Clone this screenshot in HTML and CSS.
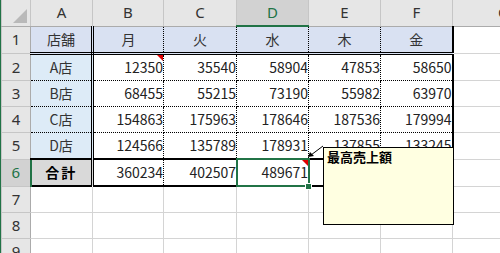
FILE: index.html
```html
<!DOCTYPE html>
<html lang="ja">
<head>
  <meta charset="UTF-8">
  <title>売上表</title>
  <link rel="stylesheet" href="styles.css">
</head>
<body>
  <div class="sheet">
    <table class="grid">
      <colgroup>
        <col class="c-head"><col class="c-a"><col class="c-b"><col class="c-c"><col class="c-d"><col class="c-e"><col class="c-f"><col class="c-g">
      </colgroup>
      <tr class="col-heads">
        <th class="corner"></th><th>A</th><th>B</th><th>C</th><th class="sel-col">D</th><th>E</th><th>F</th><th>G</th>
      </tr>
      <tr class="r1">
        <th class="row-head">1</th>
        <td class="hd">店舗</td><td class="hd">月</td><td class="hd">火</td><td class="hd">水</td><td class="hd">木</td><td class="hd last">金</td><td class="blank"></td>
      </tr>
      <tr class="body-row">
        <th class="row-head">2</th>
        <td class="shop">A店</td><td class="num note">12350</td><td class="num">35540</td><td class="num">58904</td><td class="num">47853</td><td class="num last">58650</td><td class="blank"></td>
      </tr>
      <tr class="body-row">
        <th class="row-head">3</th>
        <td class="shop">B店</td><td class="num">68455</td><td class="num">55215</td><td class="num">73190</td><td class="num">55982</td><td class="num last">63970</td><td class="blank"></td>
      </tr>
      <tr class="body-row">
        <th class="row-head">4</th>
        <td class="shop">C店</td><td class="num">154863</td><td class="num">175963</td><td class="num">178646</td><td class="num">187536</td><td class="num last">179994</td><td class="blank"></td>
      </tr>
      <tr class="body-row r5">
        <th class="row-head">5</th>
        <td class="shop">D店</td><td class="num">124566</td><td class="num">135789</td><td class="num">178931</td><td class="num">137855</td><td class="num last">133245</td><td class="blank"></td>
      </tr>
      <tr class="total">
        <th class="row-head sel-row">6</th>
        <td class="sum">合計</td><td class="num">360234</td><td class="num">402507</td><td class="num note active">489671<span class="handle"></span></td><td class="num"></td><td class="num last"></td><td class="blank"></td>
      </tr>
      <tr>
        <th class="row-head">7</th>
        <td class="blank"></td><td class="blank"></td><td class="blank"></td><td class="blank"></td><td class="blank"></td><td class="blank"></td><td class="blank"></td>
      </tr>
      <tr>
        <th class="row-head">8</th>
        <td class="blank"></td><td class="blank"></td><td class="blank"></td><td class="blank"></td><td class="blank"></td><td class="blank"></td><td class="blank"></td>
      </tr>
      <tr>
        <th class="row-head">9</th>
        <td class="blank"></td><td class="blank"></td><td class="blank"></td><td class="blank"></td><td class="blank"></td><td class="blank"></td><td class="blank"></td>
      </tr>
    </table>

    <!-- comment popup for D6 -->
    <svg class="pointer" width="20" height="14" viewBox="0 0 20 14">
      <line x1="16" y1="1" x2="4" y2="10" stroke="#000" stroke-width="1"/>
      <polygon points="1,12 3,7 7,11" fill="#000"/>
    </svg>
    <div class="comment">最高売上額</div>
  </div>
</body>
</html>
```

FILE: styles.css
```css
body {
  margin: 0;
  background: #fff;
  overflow: hidden;
  font-family: "Noto Sans CJK JP", "Noto Sans", sans-serif;
}
.sheet {
  position: relative;
  width: 500px;
  height: 253px;
  overflow: hidden;
  border-left: 1px solid #217346;
  box-sizing: border-box;
}
.grid {
  border-collapse: collapse;
  table-layout: fixed;
  width: 553px;
  font-size: 14px;
  color: #000;
}
.c-head { width: 29px; }
.c-a { width: 62px; }
.c-b { width: 71px; }
.c-c { width: 73px; }
.c-d { width: 72px; }
.c-e { width: 72px; }
.c-f { width: 72px; }
.c-g { width: 102px; }

.grid th, .grid td {
  height: 25px;
  padding: 0;
  line-height: 25px;
  white-space: nowrap;
  overflow: visible;
}

/* column and row headings */
.col-heads th {
  background: #e6e6e6;
  border: 1px solid #c6c6c6;
  border-top: none;
  border-bottom: 1px solid #ababab;
  font-family: "Noto Sans", sans-serif;
  font-weight: normal;
  font-size: 15px;
  color: #333;
  height: 25px;
}
.col-heads .sel-col {
  background: #d2d2d2;
  color: #217346;
  border-bottom: 2px solid #217346;
}
.corner {
  position: relative;
}
.corner::after {
  content: "";
  position: absolute;
  right: 3px;
  bottom: 3px;
  border-style: solid;
  border-width: 0 0 14px 14px;
  border-color: transparent transparent #b9b9b9 transparent;
}
.row-head {
  background: #e6e6e6;
  border: 1px solid #c6c6c6;
  border-right: 1px solid #ababab;
  font-family: "Noto Sans", sans-serif;
  font-weight: normal;
  font-size: 15px;
  color: #333;
}
.row-head.sel-row {
  background: #d2d2d2;
  color: #217346;
  border-right: 2px solid #217346;
}

/* empty gridlines */
.blank {
  border: 1px solid #d4d4d4;
}

/* data region */
.hd, .shop, .num, .sum {
  border: 1px dotted #000;
}
.hd {
  background: #d9e1f2;
  text-align: center;
  color: #333;
  border-bottom: 3px double #000;
}
.shop {
  background: #ddebf7;
  text-align: center;
  color: #333;
}
.r1 .hd:first-of-type,
.shop, .sum {
  border-right: 3px double #000;
}
.sum {
  background: #d9d9d9;
  text-align: center;
  font-weight: bold;
  letter-spacing: 2px;
}
.num {
  text-align: right;
  padding-right: 2px;
  position: relative;
  color: #222;
}
.last {
  border-right: 2px solid #000;
}
.r5 td:not(.blank) {
  border-bottom: 2px solid #000;
}
.total td:not(.blank) {
  border-bottom: 2px solid #000;
}

/* comment marker */
.note::before {
  content: "";
  position: absolute;
  top: 0;
  right: 0;
  border-style: solid;
  border-width: 0 6px 6px 0;
  border-color: transparent #e00000 transparent transparent;
  z-index: 2;
}

/* selected cell */
.active::after {
  content: "";
  position: absolute;
  left: -1px;
  top: -2px;
  right: -2px;
  bottom: -2px;
  border: 2px solid #217346;
  pointer-events: none;
  z-index: 1;
}
.handle {
  position: absolute;
  right: -4px;
  bottom: -5px;
  width: 5px;
  height: 5px;
  background: #217346;
  border: 1px solid #fff;
  z-index: 2;
}

.pointer {
  position: absolute;
  left: 306px;
  top: 145px;
}
.comment {
  position: absolute;
  left: 322px;
  top: 147px;
  width: 123px;
  height: 76px;
  background: #ffffe1;
  border: 1px solid #000;
  font-size: 13px;
  font-weight: bold;
  line-height: 17px;
  padding: 0 3px;
}
```
